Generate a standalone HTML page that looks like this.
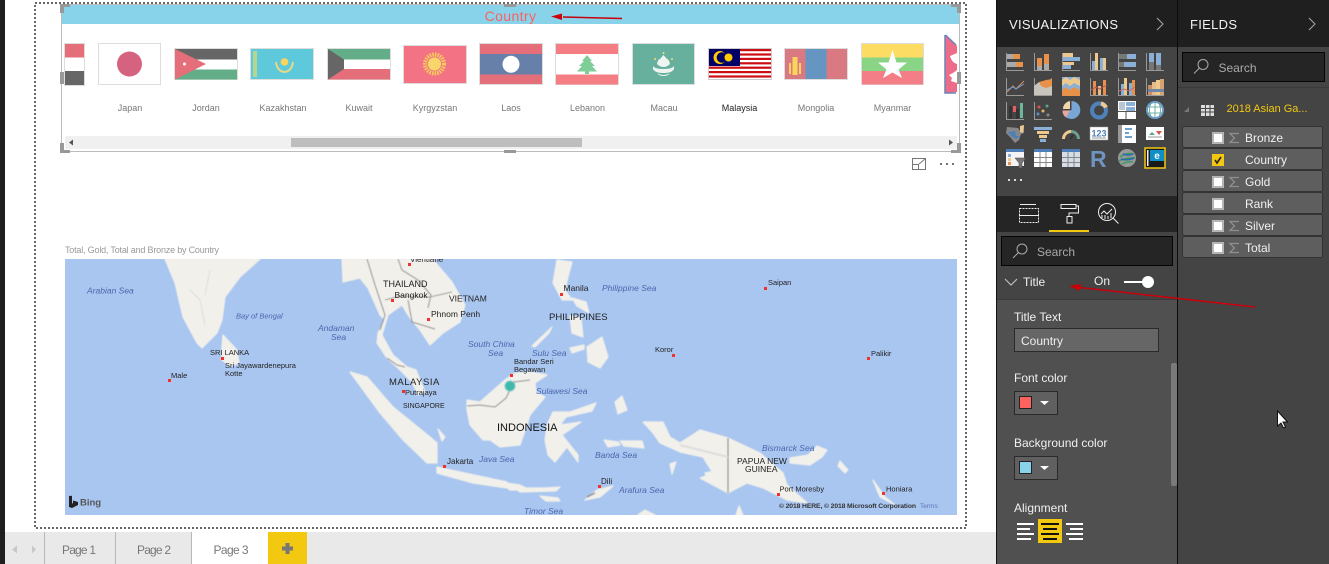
<!DOCTYPE html>
<html><head><meta charset="utf-8"><title>Power BI</title>
<style>
html,body{margin:0;padding:0;background:#fff;width:1329px;height:564px;overflow:hidden}
svg{display:block;font-family:"Liberation Sans",sans-serif}
</style></head><body>
<svg width="1329" height="564" viewBox="0 0 1329 564" xmlns="http://www.w3.org/2000/svg">
<defs><filter id="soft" x="-2%" y="-2%" width="104%" height="104%"><feGaussianBlur stdDeviation=".4"/></filter></defs>
<!-- base -->
<rect width="1329" height="564" fill="#fff"/>
<rect x="0" y="0" width="5" height="564" fill="#1f1f1f"/>
<!-- focus frame -->
<rect x="35" y="3" width="931" height="525" fill="none" stroke="#666" stroke-width="2" stroke-dasharray="2 2"/>
<!-- map -->
<g>
<rect x="65" y="259" width="892" height="256" fill="#a9c6f0"/>
<svg x="65" y="259" width="892" height="256" viewBox="65 259 892 256">
<g filter="url(#soft)">
<g fill="#f2f0ea" stroke="#f2f0ea" stroke-width="1.200" stroke-linejoin="round">
<polygon points="165,259 175,283 183,317 197,343 202,348 217,333 222,320 225,297 240,277 260,259"/>
<polygon points="223,335 237,350 239,363 230,366 222,360 222,347"/>
<polygon points="342,259 343,282 360,278 368,288 380,315 385,320 378,333 377,343 387,358 398,368 412,382 418,395 425,392 416,370 407,367 393,355 382,335 388,315 402,305 410,318 420,330 430,345 443,333 460,322 465,305 452,282 435,262 433,259"/>
<polygon points="350,372 367,377 393,407 430,437 437,443 437,463 427,463 403,440 380,413"/>
<polygon points="437,467 460,472 507,482 507,488 473,483 437,473"/>
<polygon points="467,400 480,402 505,380 515,373 530,372 547,375 535,383 536,392 545,397 530,415 527,425 520,445 500,447 490,440 483,440 470,425 467,410"/>
<polygon points="553,412 570,412 596,403 592,411 566,417 560,425 581,422 562,435 578,455 578,462 567,447 555,462 548,455 545,440 547,425"/>
<polygon points="557,260 572,262 568,277 565,290 572,300 562,300 553,283"/>
<polygon points="587,347 602,337 608,357 600,368 588,362"/>
<polygon points="532,346 552,327 549,333 535,347"/>
<polygon points="570,316 581,318 583,337 572,333"/>
<polygon points="572,298 586,302 589,313 577,306"/>
<polygon points="570,348 584,345 584,349 572,353"/>
<polygon points="643,422 663,422 670,437 680,443 700,430 728,438 760,453 783,473 787,485 807,503 787,500 763,488 747,483 728,493 713,485 700,478 713,473 703,457 680,452 660,443 653,433"/>
<polygon points="790,463 810,465 822,457 827,450 817,446 808,455 790,458"/>
<polygon points="585,500 597,490 613,486 600,497"/>
<polygon points="500,482 520,485 530,490 510,490"/>
<polygon points="515,488 545,488 560,487 556,491 520,492"/>
<polygon points="540,496 558,498 560,501 546,501"/>
<polygon points="604,440 618,442 620,445 608,447"/>
<polygon points="620,441 642,441 644,448 624,446"/>
<polygon points="615,402 622,396 627,410 618,414"/>
<polygon points="670,464 676,462 672,474"/>
<polygon points="705,473 720,470 722,482 708,480"/>
<polygon points="840,461 848,470 845,473 838,466"/>
<polygon points="873,480 885,497 895,505 880,497"/>
<polygon points="736,515 739,506 743,515"/>
<polygon points="638,515 645,510 655,515"/>
<polygon points="411,431 418,438 416,441 412,436"/>
<polygon points="438,429 445,437 442,441"/>
</g>
<g fill="none" stroke="#888" stroke-width="1">
<path d="M367 259 L375 285 L385 315 L380 330"/>
<path d="M398 259 L402 270 L418 280 L431 295 L428 308"/>
<path d="M385 300 L400 296 L430 297 L452 292" stroke="#999"/>
<path d="M408 300 L412 322 L435 329"/>
<path d="M387 358 L397 365 L405 367"/>
<path d="M467 406 L480 405 L495 407 L506 398 L514 382 L530 380"/>
<path d="M728 438 L728 493" stroke-width="1.200"/>
<path d="M587 497 L595 493" stroke-width="1.500"/>
<path d="M190 290 L200 300 L205 325 M210 270 L205 295" stroke="#ddd"/>
</g>
<path d="M680 445 L728 457" stroke="#ddd" stroke-width="2" fill="none"/>
<circle cx="510" cy="386" r="5" fill="#3fb8ab" stroke="#6cc8c2" stroke-width="1"/>
</g>
<g fill="#f2322a">
<rect x="408" y="263" width="3" height="3"/><rect x="391" y="299" width="3" height="3"/><rect x="427" y="318" width="3" height="3"/>
<rect x="221" y="357" width="3" height="3"/><rect x="168" y="379" width="3" height="3"/><rect x="402" y="390" width="3" height="3"/>
<rect x="443" y="465" width="3" height="3"/><rect x="510" y="374" width="3" height="3"/><rect x="560" y="293" width="3" height="3"/>
<rect x="764" y="287" width="3" height="3"/><rect x="672" y="354" width="3" height="3"/><rect x="867" y="357" width="3" height="3"/>
<rect x="598" y="485" width="3" height="3"/><rect x="777" y="493" width="3" height="3"/><rect x="882" y="492" width="3" height="3"/>
</g>
<g font-size="8.500" fill="#222">
<text x="383" y="287" font-size="9">THAILAND</text>
<text x="394.500" y="298">Bangkok</text>
<text x="449" y="301.500" font-size="8.500">VIETNAM</text>
<text x="431" y="317">Phnom Penh</text>
<text x="410" y="262" font-size="8">Vientiane</text>
<text x="210" y="355" font-size="7.500">SRI LANKA</text>
<text x="225" y="368" font-size="7.500">Sri Jayawardenepura</text>
<text x="225" y="376" font-size="7.500">Kotte</text>
<text x="171" y="378" font-size="7.500">Male</text>
<text x="389" y="385" font-size="9.500" letter-spacing=".5">MALAYSIA</text>
<text x="405" y="395" font-size="7.500">Putrajaya</text>
<text x="403" y="408" font-size="7">SINGAPORE</text>
<text x="497" y="431" font-size="11" fill="#111">INDONESIA</text>
<text x="447" y="464" font-size="8">Jakarta</text>
<text x="563.500" y="291" font-size="8.500">Manila</text>
<text x="549" y="320" font-size="9.500">PHILIPPINES</text>
<text x="514" y="364" font-size="7.500">Bandar Seri</text>
<text x="514" y="372" font-size="7.500">Begawan</text>
<text x="655" y="352" font-size="7.500">Koror</text>
<text x="768" y="285" font-size="7.500">Saipan</text>
<text x="871" y="356" font-size="7.500">Palikir</text>
<text x="601" y="484" font-size="8">Dili</text>
<text x="737" y="464" font-size="8.500">PAPUA NEW</text>
<text x="745" y="472" font-size="8.500">GUINEA</text>
<text x="779.500" y="491.500" font-size="7.500">Port Moresby</text>
<text x="886" y="491.500" font-size="7.500">Honiara</text>
</g>
<g font-size="8.500" fill="#4a66ad" font-style="italic">
<text x="87" y="293.500">Arabian Sea</text>
<text x="236" y="318.500" font-size="7.500">Bay of Bengal</text>
<text x="318" y="331">Andaman</text><text x="331" y="340">Sea</text>
<text x="468" y="347">South China</text><text x="488" y="356">Sea</text>
<text x="532" y="356">Sulu Sea</text>
<text x="536" y="394">Sulawesi Sea</text>
<text x="602" y="291">Philippine Sea</text>
<text x="479" y="462">Java Sea</text>
<text x="595" y="458">Banda Sea</text>
<text x="619" y="493">Arafura Sea</text>
<text x="524" y="514">Timor Sea</text>
<text x="762" y="451">Bismarck Sea</text>
</g>
<text x="779" y="508" font-size="6.800" fill="#333" font-weight="bold" textLength="137">© 2018 HERE, © 2018 Microsoft Corporation</text>
<text x="920" y="508" font-size="6.500" fill="#5a78b8">Terms</text>
<path d="M69 496 v11 l3 1 6-3 v-3 l-5-1.500 v2.500 l-1 .8 v-8 z" fill="#222"/>
<text x="80" y="505.500" font-size="9.500" font-weight="bold" fill="#555">Bing</text>
</svg>
</g>
<text x="65" y="253" font-size="9" fill="#999" textLength="154">Total, Gold, Total and Bronze by Country</text>

<!-- slicer visual -->
<rect x="61.500" y="4.500" width="898" height="147" fill="#fff" stroke="#bbb"/>
<rect x="62" y="5" width="897" height="19" fill="#89d3ea"/>
<text x="510.500" y="21" font-size="14" fill="#ff5f5f" text-anchor="middle" letter-spacing=".4">Country</text>
<rect x="65" y="136" width="892" height="13" fill="#f0f0f0"/>
<rect x="291" y="138" width="291" height="9" fill="#bebebe"/>
<path d="M69 142.500 l4-3 v6z M953 142.500 l-4-3 v6z" fill="#555"/>
<!-- flags -->
<g>
<g><rect x="64.500" y="43.500" width="20" height="42" fill="#fff" stroke="#ddd"/><rect x="65" y="44" width="19" height="13.500" fill="#e46f7a"/><rect x="65" y="71" width="19" height="14" fill="#666"/></g>
<g><rect x="98.500" y="43.500" width="62" height="41" fill="#fff" stroke="#ddd"/><circle cx="129.500" cy="64" r="12.500" fill="#d5637f"/></g>
<g><rect x="174.500" y="48.500" width="63" height="31" fill="#fff" stroke="#ddd"/><rect x="175" y="49" width="62" height="10.500" fill="#666"/><rect x="175" y="69.500" width="62" height="10" fill="#64ad89"/><polygon points="175,49 206,64 175,79.500" fill="#e46f7a"/><circle cx="184.500" cy="64" r="1.500" fill="#fff"/></g>
<g><rect x="250.500" y="48.500" width="63" height="31" fill="#5fc9dc" stroke="#ddd"/><rect x="253" y="51" width="4" height="26" fill="#b8d78e"/><circle cx="284.500" cy="62" r="3.800" fill="#fbd45e"/><path d="M276 62 q1 9 8.500 10 q7.500-1 8.500-10" fill="none" stroke="#e5d98a" stroke-width="2"/></g>
<g><rect x="327.500" y="48.500" width="63" height="31" fill="#fff" stroke="#ddd"/><rect x="328" y="49" width="62" height="10.500" fill="#64ad89"/><rect x="328" y="69" width="62" height="10.500" fill="#e46f7a"/><polygon points="328,49 344,59.500 344,69 328,79.500" fill="#666"/></g>
<g><rect x="403.500" y="45.500" width="63" height="38" fill="#f37283" stroke="#ddd"/><circle cx="434.500" cy="64" r="9" fill="none" stroke="#f7cd5c" stroke-width="5" stroke-dasharray="1.500 1"/><circle cx="434.500" cy="64" r="7" fill="#f9d66a" stroke="#e58a7c"/></g>
<g><rect x="479.500" y="43.500" width="63" height="41" fill="#e46f7a" stroke="#ddd"/><rect x="480" y="54" width="62" height="20.500" fill="#6680aa"/><circle cx="511" cy="64.300" r="8.500" fill="#fff"/></g>
<g><rect x="555.500" y="43.500" width="63" height="41" fill="#fff" stroke="#ddd"/><rect x="556" y="44" width="62" height="10" fill="#f57d84"/><rect x="556" y="74.500" width="62" height="10" fill="#f57d84"/><polygon points="587,55 592,61 590,61 595,66 592,66 597,71.500 589,71.500 589,74 585,74 585,71.500 577,71.500 582,66 579,66 584,61 582,61" fill="#7fce98"/></g>
<g><rect x="632.500" y="43.500" width="62" height="41" fill="#67b09e" stroke="#ddd"/><path d="M653 66 q2 3 10.500 3 q8.500 0 10.500-3 v3 q-2 4-10.500 4 q-8.500 0-10.500-4z M657 64 q1-5 3-5 l3.500-4 3.500 4 q2 0 3 5 q-3 3-6.500 3 q-3.500 0-6.500-3z M657 73 q6.500 4 13 0 q-2 3-6.500 3 q-4.500 0-6.500-3z" fill="#eef5f1"/><circle cx="663.500" cy="53" r="1" fill="#f1de7b"/><circle cx="655" cy="59" r="1" fill="#f1de7b"/><circle cx="672" cy="59" r="1" fill="#f1de7b"/></g>
<g><rect x="708.500" y="48.500" width="63" height="31" fill="#fff" stroke="#ccc"/>
<g fill="#cc0d14"><rect x="709" y="49" width="62" height="2.200"/><rect x="709" y="53.400" width="62" height="2.200"/><rect x="709" y="57.800" width="62" height="2.200"/><rect x="709" y="62.200" width="62" height="2.200"/><rect x="709" y="66.600" width="62" height="2.200"/><rect x="709" y="71" width="62" height="2.200"/><rect x="709" y="75.400" width="62" height="2.200"/></g>
<rect x="709" y="49" width="31" height="17" fill="#010066"/><circle cx="720" cy="57.500" r="6.500" fill="#fc0"/><circle cx="722" cy="57.500" r="5.300" fill="#010066"/><circle cx="728.500" cy="57.500" r="4" fill="#fc0"/></g>
<g><rect x="784.500" y="48.500" width="63" height="31" fill="#d97a82" stroke="#ddd"/><rect x="805.500" y="49" width="21" height="30" fill="#6596c2"/><rect x="789" y="63" width="2" height="11" fill="#fbd45e"/><rect x="799" y="63" width="2" height="11" fill="#fbd45e"/><rect x="792.500" y="57" width="5" height="18" fill="#fbd45e"/></g>
<g><rect x="861.500" y="43.500" width="62" height="41" fill="#fff" stroke="#ddd"/><rect x="862" y="44" width="61" height="13.500" fill="#fddc63"/><rect x="862" y="57.500" width="61" height="13.500" fill="#8ad485"/><rect x="862" y="71" width="61" height="13.500" fill="#f37e88"/><polygon points="892.500,50 896.500,62.500 907,62.500 898.500,69.500 902,78 892.500,72.500 883,78 886.500,69.500 878,62.500 888.500,62.500" fill="#fff"/></g>
<g><polygon points="945,35 957,46 957,92 945,93" fill="#ed6c8a"/><path d="M945.500 35 L956 45 M945 35 V93 H956" fill="none" stroke="#6b84b6" stroke-width="1.500"/><path d="M950 56 l7-3 v11 q-5-1-7-8z M957 70 l-4 3-4 2 3 3-1 3 6 2z" fill="#fff"/></g>
</g>
<g font-size="9" fill="#777" text-anchor="middle">
<text x="130" y="111">Japan</text><text x="206" y="111">Jordan</text><text x="283" y="111">Kazakhstan</text><text x="359" y="111">Kuwait</text><text x="435" y="111">Kyrgyzstan</text><text x="511" y="111">Laos</text><text x="587.500" y="111">Lebanon</text><text x="664" y="111">Macau</text><text x="739.500" y="111" fill="#222">Malaysia</text><text x="816" y="111">Mongolia</text><text x="892.500" y="111">Myanmar</text>
</g>
<!-- handles -->
<g fill="#999">
<path d="M60 4h10v3h-6v6h-4zM60 72h4v12h-4zM504 4h12v3h-12zM504 150h12v3h-12zM951 4h10v9h-4v-6h-6zM957 72h4v12h-4zM60 143h4v7h6v3h-10zM951 150h6v-7h4v10h-10z"/>
</g>
<!-- visual header icons -->
<g fill="none" stroke="#777" stroke-width="1"><path d="M912.500 158.500h13v11h-13zM912.500 164.500h6v5M919 164l6-5M921 158.500h4.500v4"/></g>
<g fill="#777"><rect x="940" y="163" width="2" height="2"/><rect x="946" y="163" width="2" height="2"/><rect x="952" y="163" width="2" height="2"/></g>
<!-- tab bar -->
<rect x="5" y="532" width="991" height="32" fill="#e9e9e9"/>
<rect x="192" y="532" width="76" height="32" fill="#fff"/>
<rect x="268" y="532" width="39" height="32" fill="#f2c811"/>
<path d="M44.500 532v32M115.500 532v32M191.500 532v32" stroke="#b8b8b8"/>
<path d="M12 549.500l5-4v8zM36 549.500l-4-4v8z" fill="#c8c8c8"/>
<path d="M285.500 543h4v3.500h3.500v4h-3.500v3.500h-4v-3.500h-3.500v-4h3.500z" fill="#777"/>
<g font-size="12" fill="#777">
<text x="62" y="554" textLength="34">Page 1</text><text x="137" y="554" textLength="34">Page 2</text><text x="213.500" y="554" textLength="35">Page 3</text>
</g>
<!-- panels -->
<rect x="996" y="0" width="333" height="564" fill="#444"/>
<rect x="996" y="0" width="1" height="564" fill="#111"/>
<rect x="997" y="0" width="180" height="47" fill="#1f1f1f"/>
<rect x="1178" y="0" width="151" height="47" fill="#1f1f1f"/>
<rect x="997" y="196" width="180" height="36" fill="#252525"/>
<rect x="1049" y="230" width="40" height="2" fill="#f2c811"/>
<rect x="997" y="300" width="180" height="264" fill="#505050"/>
<rect x="997" y="299" width="180" height="1" fill="#3a3a3a"/>
<rect x="1177" y="0" width="1" height="564" fill="#0c0c0c"/>
<rect x="1178" y="87" width="151" height="1" fill="#3a3a3a"/>
<g font-size="13" fill="#f4f4f4">
<text x="1009" y="29" textLength="109">VISUALIZATIONS</text>
<text x="1190" y="29" textLength="47">FIELDS</text>
</g>
<path d="M1157 18l6 6-6 6M1309 18l6 6-6 6" fill="none" stroke="#aaa" stroke-width="1"/>
<!-- search boxes -->
<rect x="1182.500" y="52.500" width="142" height="29" fill="#252525" stroke="#050505"/>
<rect x="1001.500" y="236.500" width="171" height="29" fill="#252525" stroke="#050505"/>
<g fill="none" stroke="#aaa"><circle cx="1203" cy="64.500" r="5"/><path d="M1199.500 68l-5.500 5.500"/><circle cx="1022" cy="249" r="5"/><path d="M1018.500 252.500l-5.500 5.500"/></g>
<g font-size="12" fill="#aaa"><text x="1218.500" y="72">Search</text><text x="1037" y="256">Search</text></g>
<!-- fields tree -->
<path d="M1184 112l5-5v5z" fill="#777"/>
<g><rect x="1201" y="105" width="13" height="11" fill="#ddd"/><path d="M1201 108.500h13M1201 112h13M1205.500 105v11M1210 105v11" stroke="#444"/></g>
<text x="1226.500" y="112" font-size="11" fill="#f2c811" textLength="81">2018 Asian Ga...</text>
<g fill="#5e5e5e" stroke="#333"><rect x="1182.500" y="126.500" width="140" height="21" rx="2"/><rect x="1182.500" y="148.500" width="140" height="21" rx="2"/><rect x="1182.500" y="170.500" width="140" height="21" rx="2"/><rect x="1182.500" y="192.500" width="140" height="21" rx="2"/><rect x="1182.500" y="214.500" width="140" height="21" rx="2"/><rect x="1182.500" y="236.500" width="140" height="21" rx="2"/></g>
<g fill="#fff" stroke="#b5b5b5" stroke-width="2"><rect x="1213" y="133" width="10" height="10"/><rect x="1213" y="177" width="10" height="10"/><rect x="1213" y="199" width="10" height="10"/><rect x="1213" y="221" width="10" height="10"/><rect x="1213" y="243" width="10" height="10"/></g>
<rect x="1212" y="154" width="12" height="12" fill="#f2c811"/>
<path d="M1215 160l2 3 4-6" fill="none" stroke="#222" stroke-width="1.600"/>
<g fill="none" stroke="#8f8f8f" stroke-width="1.300"><path d="M1239 133.500h-9l4.500 4.500-4.500 4.500h9M1239 177.500h-9l4.500 4.500-4.500 4.500h9M1239 221.500h-9l4.500 4.500-4.500 4.500h9M1239 243.500h-9l4.500 4.500-4.500 4.500h9"/></g>
<g font-size="12" fill="#f0f0f0">
<text x="1245" y="142">Bronze</text><text x="1245" y="164">Country</text><text x="1245" y="186">Gold</text><text x="1245" y="208">Rank</text><text x="1245" y="230">Silver</text><text x="1245" y="252">Total</text>
</g>
<!-- format pane -->
<path d="M1005 279l6 6 6-6" fill="none" stroke="#bbb" stroke-width="1.200"/>
<text x="1023" y="286" font-size="12" fill="#f0f0f0">Title</text>
<text x="1094" y="285" font-size="12" fill="#f0f0f0">On</text>
<rect x="1124" y="281" width="20" height="2" fill="#fff"/><circle cx="1148" cy="282" r="6" fill="#fff"/>
<g font-size="12" fill="#f0f0f0">
<text x="1014" y="321">Title Text</text><text x="1014" y="382">Font color</text><text x="1014" y="447">Background color</text><text x="1014" y="512">Alignment</text>
</g>
<rect x="1014.500" y="328.500" width="144" height="23" fill="#666" stroke="#2a2a2a"/>
<text x="1021" y="345" font-size="12" fill="#eee">Country</text>
<rect x="1014.500" y="391.500" width="43" height="23" fill="#606060" stroke="#2a2a2a"/>
<rect x="1019.500" y="396.500" width="12" height="12" fill="#fd625e" stroke="#222"/>
<path d="M1040 401h9l-4.500 4z" fill="#fff"/>
<rect x="1014.500" y="456.500" width="43" height="23" fill="#606060" stroke="#2a2a2a"/>
<rect x="1019.500" y="461.500" width="12" height="12" fill="#89d3ea" stroke="#222"/>
<path d="M1040 466h9l-4.500 4z" fill="#fff"/>
<rect x="1171" y="363" width="6" height="123" rx="2" fill="#7a7a7a"/>
<rect x="1038" y="519" width="24" height="24" fill="#f2c811"/>
<g fill="#fff"><rect x="1017" y="523" width="17" height="2"/><rect x="1017" y="528" width="13" height="2"/><rect x="1017" y="533" width="17" height="2"/><rect x="1017" y="538" width="14" height="2"/><rect x="1066" y="523" width="17" height="2"/><rect x="1070" y="528" width="13" height="2"/><rect x="1066" y="533" width="17" height="2"/><rect x="1069" y="538" width="14" height="2"/></g>
<g fill="#111"><rect x="1041" y="523" width="18" height="2"/><rect x="1043" y="528" width="14" height="2"/><rect x="1041" y="533" width="18" height="2"/><rect x="1043" y="538" width="14" height="2"/></g>
<!-- viz icons -->
<g>
<g transform="translate(1006,53)"><path d="M.5 0v17.500H18" fill="none" stroke="#999"/><rect x="1" y="1" width="6" height="5" fill="#aaa"/><rect x="7" y="1" width="7" height="5" fill="#e8914a"/><rect x="1" y="9" width="9" height="5" fill="#aaa"/><rect x="10" y="9" width="7" height="5" fill="#e8914a"/></g>
<g transform="translate(1034,53)"><path d="M.5 0v17.500H18" fill="none" stroke="#999"/><rect x="3" y="5" width="5" height="8" fill="#e8914a"/><rect x="3" y="13" width="5" height="4" fill="#aaa"/><rect x="10" y="1" width="5" height="10" fill="#e8914a"/><rect x="10" y="11" width="5" height="6" fill="#aaa"/></g>
<g transform="translate(1062,53)"><path d="M.5 0v17.500H18" fill="none" stroke="#999"/><rect x="1" y="0" width="10" height="4" fill="#edc98e"/><rect x="1" y="4" width="17" height="4" fill="#8bb0d8"/><rect x="1" y="9" width="11" height="3" fill="#edc98e"/><rect x="1" y="12" width="8" height="4" fill="#8bb0d8"/></g>
<g transform="translate(1090,53)"><path d="M.5 0v17.500H18" fill="none" stroke="#999"/><rect x="2" y="8" width="3" height="9" fill="#8bb0d8"/><rect x="5" y="0" width="3" height="17" fill="#edc98e"/><rect x="10" y="5" width="3" height="12" fill="#8bb0d8"/><rect x="13" y="5" width="3" height="12" fill="#edc98e"/></g>
<g transform="translate(1118,53)"><path d="M.5 0v17.500H18" fill="none" stroke="#999"/><rect x="1" y="1" width="8" height="5" fill="#777"/><rect x="9" y="1" width="9" height="5" fill="#8bb0d8"/><rect x="1" y="9" width="5" height="5" fill="#777"/><rect x="6" y="9" width="12" height="5" fill="#8bb0d8"/></g>
<g transform="translate(1146,53)"><path d="M.5 0v17.500H18" fill="none" stroke="#999"/><rect x="3" y="0" width="5" height="9" fill="#8bb0d8"/><rect x="3" y="9" width="5" height="8" fill="#777"/><rect x="10" y="0" width="5" height="12" fill="#8bb0d8"/><rect x="10" y="12" width="5" height="5" fill="#777"/></g>

<g transform="translate(1006,78)"><path d="M.5 0v17.500H18" fill="none" stroke="#999"/><path d="M1 14l6-6 3 3 8-8" fill="none" stroke="#d98f60"/><path d="M1 12l6-3 3 2 8-5" fill="none" stroke="#6f97c9"/></g>
<g transform="translate(1034,78)"><path d="M.5 0v17.500H18" fill="none" stroke="#999"/><polygon points="0,8 5,4 12,6 18,0 18,17 0,17" fill="#c9c4bb"/><polygon points="5,4 12,2 18,1 18,8 12,10 7,8" fill="#e8914a"/></g>
<g transform="translate(1062,77)"><rect width="18" height="19" fill="#8bb0d8"/><polygon points="0,3 4,0 8,3 12,0 18,3 18,9 12,6 8,9 4,6 0,9" fill="#edc98e"/><polygon points="0,13 4,10 8,13 12,10 18,13 18,19 0,19" fill="#e8914a"/></g>
<g transform="translate(1090,78)"><path d="M.5 0v17.500H18" fill="none" stroke="#999"/><rect x="3" y="3" width="3" height="14" fill="#e8914a"/><rect x="8" y="8" width="3" height="9" fill="#e8b98a"/><rect x="13" y="2" width="3" height="15" fill="#e8914a"/><path d="M1 12l5-3 4 2 7-4" fill="none" stroke="#b55"/></g>
<g transform="translate(1118,78)"><path d="M.5 0v17.500H18" fill="none" stroke="#999"/><rect x="3" y="6" width="3" height="11" fill="#8bb0d8"/><rect x="6" y="0" width="3" height="17" fill="#edc98e"/><rect x="11" y="5" width="3" height="12" fill="#8bb0d8"/><rect x="14" y="2" width="3" height="15" fill="#e8914a"/><path d="M1 13l5-2 5 2 6-4" fill="none" stroke="#c66"/></g>
<g transform="translate(1146,78)"><path d="M.5 0v17.500H18" fill="none" stroke="#999"/><rect x="2" y="7" width="4" height="10" fill="#c98f63"/><rect x="6" y="4" width="4" height="13" fill="#e8b98a"/><rect x="10" y="2" width="4" height="15" fill="#edc98e"/><rect x="14" y="1" width="4" height="16" fill="#d6a26f"/><rect x="2" y="11" width="16" height="3" fill="#6f86a8"/></g>

<g transform="translate(1006,102)"><path d="M.5 0v17.500H18" fill="none" stroke="#999"/><rect x="3" y="4" width="3" height="13" fill="#333"/><rect x="7" y="4" width="3" height="6" fill="#e46060"/><rect x="10" y="7" width="3" height="10" fill="#333"/><rect x="14" y="1" width="3" height="15" fill="#6fb59a"/></g>
<g transform="translate(1034,102)"><path d="M.5 0v17.500H18" fill="none" stroke="#999"/><circle cx="5" cy="5" r="1.500" fill="#d9534f"/><circle cx="13" cy="4" r="1.500" fill="#5aa58c"/><circle cx="4" cy="12" r="1.500" fill="#5f8fc4"/><circle cx="9" cy="9" r="1.500" fill="#e5b76b"/><circle cx="14" cy="13" r="1.500" fill="#888"/></g>
<g transform="translate(1062,101)"><path d="M9.500 0a9 9 0 1 1-9 11l9-2z" fill="#7aa6d6"/><path d="M8 0v8l-7 0a9 8 0 0 1 7-8z" fill="#f0d6a8"/><path d="M.5 9.500l7.500 0-4 7a9 9 0 0 1-3.500-7z" fill="#e8a99a"/></g>
<g transform="translate(1090,101)"><circle cx="9" cy="9.500" r="7" fill="none" stroke="#4f82bd" stroke-width="4"/><path d="M11 2.500a7 7 0 0 1 5 4" fill="none" stroke="#edc98e" stroke-width="4"/></g>
<g transform="translate(1118,101)"><rect width="18" height="18" fill="#fff"/><rect x="1" y="1" width="6" height="8" fill="#b8c6d6"/><rect x="8" y="1" width="9" height="4" fill="#8bb0d8"/><rect x="8" y="6" width="9" height="4" fill="#8bb0d8"/><path d="M0 10.500h18M8 10.500v7.500" stroke="#555"/></g>
<g transform="translate(1146,101)"><circle cx="9" cy="9" r="8" fill="#fff" stroke="#6f9fce" stroke-width="2"/><path d="M1 6h16M1 12h16M9 1v16M5 2q-3 7 0 14M13 2q3 7 0 14" stroke="#4f9f8f" fill="none" stroke-width=".8"/></g>

<g transform="translate(1006,125)"><polygon points="1,2 12,3 14,6 18,0 18,8 15,9 13,15 9,18 4,12 0,8" fill="#888"/><polygon points="2,7 9,6 10,11 14,11 10,14 5,11" fill="#4f7fb8"/><polygon points="14,1 18,0 17,8 14,7" fill="#edc98e"/></g>
<g transform="translate(1034,125)"><rect x="0" y="2" width="18" height="3" fill="#8bb0d8"/><rect x="3" y="6" width="12" height="3" fill="#edc98e"/><rect x="5" y="10" width="8" height="3" fill="#edc98e"/><rect x="6" y="14" width="6" height="3" fill="#8bb0d8"/></g>
<g transform="translate(1062,125)"><path d="M1.500 14A7.500 7.500 0 0 1 9 6.500" fill="none" stroke="#edc98e" stroke-width="3"/><path d="M9 6.500A7.500 7.500 0 0 1 16.500 14" fill="none" stroke="#6fa08c" stroke-width="3"/><path d="M8 14l4-5" stroke="#333" stroke-width="1.500"/></g>
<g transform="translate(1090,127)"><rect width="18" height="13" fill="#fff" stroke="#999" stroke-width=".5"/><text x="9" y="9.500" font-size="9" font-weight="bold" fill="#4f7fb8" text-anchor="middle">123</text><rect x="2" y="10.500" width="14" height="1" fill="#999"/></g>
<g transform="translate(1118,125)"><rect width="18" height="18" fill="#fff"/><rect x="0" y="0" width="4" height="18" fill="#999"/><rect x="7" y="3" width="7" height="2" fill="#6f9fce"/><rect x="7" y="7" width="4" height="2" fill="#6f9fce"/><rect x="7" y="11" width="7" height="2" fill="#6f9fce"/></g>
<g transform="translate(1146,127)"><rect width="18" height="13" fill="#fff"/><path d="M3 8l3-3 3 3z" fill="#5aa58c"/><path d="M10 4h6l-3 4z" fill="#d9534f"/><rect x="2" y="9.500" width="14" height="1" fill="#999"/></g>

<g transform="translate(1006,149)"><rect width="18" height="17" fill="#f4f4f4"/><rect width="18" height="3" fill="#4f7fb8"/><rect x="2" y="5" width="3" height="3" fill="#8bb0d8"/><rect x="2" y="9" width="3" height="3" fill="#edc98e"/><rect x="2" y="13" width="3" height="3" fill="#e8914a"/><polygon points="9,9 20,9 16,14 16,19 13,19 13,14" fill="#777" stroke="#444" stroke-width=".5"/></g>
<g transform="translate(1034,149)"><rect width="18" height="18" fill="#fff"/><rect width="18" height="3" fill="#4f7fb8"/><path d="M6 3v15M12 3v15M0 8.500h18M0 13.500h18" stroke="#888"/></g>
<g transform="translate(1062,149)"><rect width="18" height="18" fill="#d5dde6"/><rect width="18" height="3" fill="#4f7fb8"/><path d="M6 3v15M12 3v15M0 8.500h18M0 13.500h18" stroke="#888"/></g>
<text x="1090" y="167" font-size="23" font-weight="bold" fill="#6f94bf">R</text>
<g transform="translate(1118,149)"><circle cx="9" cy="9" r="9" fill="#999"/><path d="M2 8q7-5 14-3M1 12q8-4 16-3M4 15q6-3 11-2" fill="none" stroke="#3f9c62" stroke-width="1.600"/><path d="M5 5q5 2 10 0M3 10q6 2 13-1" fill="none" stroke="#2f66b0" stroke-width="1.500"/></g>
<g transform="translate(1144,147)"><rect x="1" y="1" width="20" height="20" fill="#1a1a1a" stroke="#f2c811" stroke-width="1.500"/><rect x="6" y="3" width="14" height="11" fill="#0f8fc7"/><rect x="3" y="3" width="1.500" height="16" fill="#eee"/><text x="13" y="12" font-size="10" font-weight="bold" fill="#fff" text-anchor="middle">e</text></g>
<g fill="#ddd"><rect x="1008" y="179" width="2" height="2"/><rect x="1014" y="179" width="2" height="2"/><rect x="1020" y="179" width="2" height="2"/></g>
</g>
<!-- pane tabs -->
<g fill="none" stroke="#eee" stroke-width="1">
<path d="M1020 204.500h16"/><path d="M1019.500 208.500h19v7h-19zM1019.500 215.500h19v7h-19z" stroke-dasharray="2 1"/>
<path d="M1061 204.500h15v4h-15zM1076 206h2.500v7h-9.500v3M1067 216.500h5v6.500h-5z"/>
<circle cx="1107" cy="212" r="8.500"/><path d="M1113 218l5.500 5.500M1101 214l3-3 3 3 5-5M1102 218v-3M1105 219v-4M1108 219v-3M1111 218v-5"/>
</g>
<!-- red annotations -->
<path d="M622 18.500L563 17" stroke="#c8000a" stroke-width="1.600" fill="none"/>
<polygon points="551,16.500 562,13.500 562,20" fill="#c8000a"/>
<path d="M1255 307L1080 287.500" stroke="#c8000a" stroke-width="1.600" fill="none"/>
<polygon points="1069,286 1081,284 1080,291" fill="#c8000a"/>
<!-- cursor -->
<path d="M1277.500 411v15l3.500-3 2.500 5 2-1-2.500-5h4.500z" fill="#fff" stroke="#111" stroke-width="1"/>
</svg>
</body></html>
